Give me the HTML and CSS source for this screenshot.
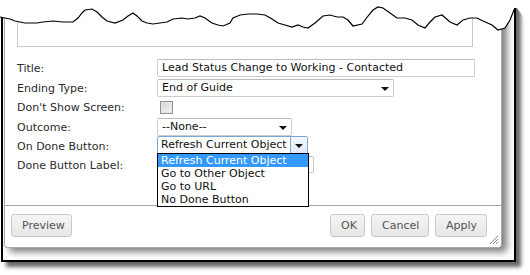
FILE: index.html
```html
<!DOCTYPE html>
<html lang="en">
<head>
  <meta charset="UTF-8" />
  <title>Guide Properties</title>
  <link rel="stylesheet" href="styles.css">
</head>
<body>
  <div class="shot">
    <div class="frame">
      <div class="dialog">
        <div class="dialog-body">
          <div class="panel"></div>

          <div class="form">
            <div class="label">Title:</div>
            <div class="cell"><div class="box title-box">Lead Status Change to Working - Contacted</div></div>

            <div class="label">Ending Type:</div>
            <div class="cell"><div class="box select ending-box">End of Guide<span class="tri"></span></div></div>

            <div class="label">Don't Show Screen:</div>
            <div class="cell"><div class="check"></div></div>

            <div class="label">Outcome:</div>
            <div class="cell"><div class="box select outcome-box">--None--<span class="tri"></span></div></div>

            <div class="label">On Done Button:</div>
            <div class="cell">
              <div class="box select focused done-box">Refresh Current Object<span class="drop-btn"><span class="tri"></span></span></div>
            </div>

            <div class="label">Done Button Label:</div>
            <div class="cell">
              <div class="box label-box"></div>
              <ul class="droplist">
                <li class="selected">Refresh Current Object</li>
                <li>Go to Other Object</li>
                <li>Go to URL</li>
                <li>No Done Button</li>
              </ul>
            </div>
          </div>
        </div>

        <div class="separator"></div>

        <div class="footer">
          <button class="btn preview">Preview</button>
          <div class="actions">
            <button class="btn ok">OK</button>
            <button class="btn cancel">Cancel</button>
            <button class="btn apply">Apply</button>
          </div>
        </div>

        <svg class="grip" width="10" height="10" viewBox="0 0 10 10">
          <path d="M9 1 L1 9 M9 4 L4 9 M9 7 L7 9" stroke="#888" stroke-width="1" fill="none"/>
        </svg>
      </div>
    </div>

    <svg class="torn" width="530" height="40" viewBox="0 0 530 40">
      <polygon fill="#fff" points="0,0 530,0 530,26 517,8 515,8 514,10 510,20 505,28 498,30 492,25 483,21 477,18 470,18 463,20 457,25 450,22 442,15 435,17 430,22 425,28 418,25 412,20 405,18 397,18 390,13 383,8 378,7 373,10 368,16 362,24 353,26 348,20 343,17 337,17 330,15 323,16 315,23 308,28 303,27 298,25 292,27 285,25 278,23 272,19 265,15 257,14 248,14 240,15 233,18 230,23 223,26 218,25 212,23 205,18 200,16 195,18 188,19 182,18 173,19 167,22 160,23 153,24 147,23 142,21 137,16 133,13 128,16 123,20 115,23 107,21 102,17 97,12 92,9 85,10 82,13 78,18 73,22 63,22 53,21 43,22 37,23 30,23 25,23 20,22 15,21 10,19 5,18 0,17"/>
      <polyline fill="none" stroke="#000" stroke-width="1.2" points="0,17 5,18 10,19 15,21 20,22 25,23 30,23 37,23 43,22 53,21 63,22 73,22 78,18 82,13 85,10 92,9 97,12 102,17 107,21 115,23 123,20 128,16 133,13 137,16 142,21 147,23 153,24 160,23 167,22 173,19 182,18 188,19 195,18 200,16 205,18 212,23 218,25 223,26 230,23 233,18 240,15 248,14 257,14 265,15 272,19 278,23 285,25 292,27 298,25 303,27 308,28 315,23 323,16 330,15 337,17 343,17 348,20 353,26 362,24 368,16 373,10 378,7 383,8 390,13 397,18 405,18 412,20 418,25 425,28 430,22 435,17 442,15 450,22 457,25 463,20 470,18 477,18 483,21 492,25 498,30 505,28 510,20 514,10 515,8"/>
    </svg>
  </div>
</body>
</html>
```

FILE: styles.css
```css
body {
  margin: 0;
  background: #fff;
  font-family: "DejaVu Sans", Verdana, sans-serif;
  font-size: 11px;
  color: #2b2b2b;
}

.shot {
  position: relative;
  width: 530px;
  height: 275px;
  overflow: hidden;
}

.frame {
  box-sizing: border-box;
  margin-left: 1px;
  width: 515px;
  height: 262px;
  border: 2px solid #000;
  border-top: none;
  background: #fff;
  box-shadow: 5px 5px 4px rgba(0, 0, 0, 0.6);
}

.dialog {
  position: relative;
  box-sizing: border-box;
  margin-left: 1px;
  width: 498px;
  height: 248px;
  border: 1px solid #a8a8a8;
  border-top: none;
  border-radius: 0 0 4px 4px;
  background: #fff;
  box-shadow: 5px 4px 7px rgba(0, 0, 0, 0.5);
}

.dialog-body {
  padding: 0 12px;
}

.panel {
  box-sizing: border-box;
  width: 456px;
  height: 47px;
  border: 1px solid #c8c8c8;
  border-top: none;
}

.form {
  margin-top: 12px;
  display: grid;
  grid-template-columns: 140px 1fr;
  grid-template-rows: 20px 19px 20px 19px 19px 19px;
  height: 116px;
}

.label {
  display: flex;
  align-items: center;
  padding-bottom: 1px;
  white-space: nowrap;
}

.cell {
  position: relative;
}

.box {
  position: relative;
  box-sizing: border-box;
  height: 18px;
  border: 1px solid #cdcdcd;
  border-top-color: #bcbcbc;
  border-radius: 2px;
  padding: 0 4px;
  line-height: 16px;
  color: #111;
  white-space: nowrap;
  background: #fff;
}

.title-box {
  width: 318px;
}

.ending-box {
  width: 237px;
}

.outcome-box {
  width: 135px;
}

.done-box {
  width: 151px;
  margin-top: -1px;
  padding-left: 3px;
}

.label-box {
  width: 157px;
  height: 17px;
}

.tri {
  position: absolute;
  right: 4px;
  top: 7px;
  width: 0;
  height: 0;
  border-left: 4px solid transparent;
  border-right: 4px solid transparent;
  border-top: 4px solid #111;
}

.focused {
  border-color: #7ba7d6;
  border-radius: 2px 2px 0 0;
}

.drop-btn {
  position: absolute;
  right: 0;
  top: 0;
  width: 16px;
  height: 16px;
  border-left: 1px solid #7ba7d6;
  background: linear-gradient(#f4f8fc, #dfe9f5);
}

.drop-btn .tri {
  right: 4px;
  top: 7px;
}

.check {
  box-sizing: border-box;
  width: 13px;
  height: 13px;
  margin: 3px 0 0 3px;
  border: 1px solid #8f8f8f;
  background: linear-gradient(135deg, #d6d6d6, #f6f6f6);
  box-shadow: inset 0 0 0 1px #e8e8e8;
}

.droplist {
  position: absolute;
  left: 0;
  top: -3px;
  box-sizing: border-box;
  width: 152px;
  margin: 0;
  padding: 0;
  list-style: none;
  border: 1px solid #000;
  background: #fff;
  color: #111;
}

.droplist li {
  height: 13px;
  line-height: 13px;
  padding-left: 3px;
  white-space: nowrap;
}

.droplist .selected {
  background: #3399ff;
  color: #fff;
}

.separator {
  margin-top: 30px;
  height: 1px;
  background: #a4a4a4;
}

.footer {
  display: flex;
  justify-content: space-between;
  padding: 8px 14px 0 6px;
}

.actions {
  display: flex;
  gap: 6px;
}

.btn {
  box-sizing: border-box;
  height: 23px;
  padding: 0 10px;
  border: 1px solid #c9c9c9;
  border-radius: 3px;
  background: linear-gradient(#f5f5f5, #e6e6e6);
  font-family: "DejaVu Sans", Verdana, sans-serif;
  font-size: 11px;
  color: #555;
}

.preview {
  width: 61px;
}

.ok {
  width: 35px;
}

.cancel {
  width: 58px;
}

.apply {
  width: 52px;
}

.grip {
  position: absolute;
  right: 2px;
  bottom: 2px;
}

.torn {
  position: absolute;
  left: 0;
  top: 0;
}
```
